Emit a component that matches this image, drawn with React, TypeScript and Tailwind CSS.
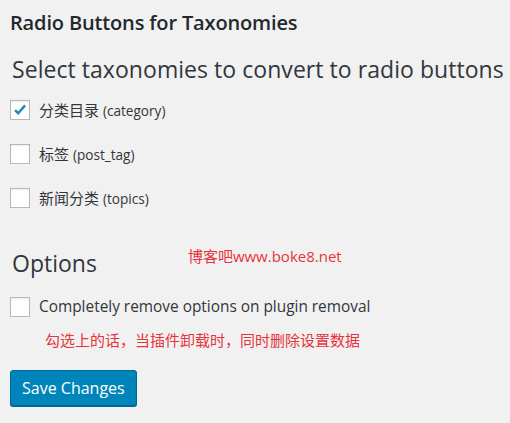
import React from "react";

const font = { fontFamily: '"Open Sans", "Noto Sans CJK SC", sans-serif' };

interface RowProps {
    label: string;
    note: string;
    checked?: boolean;
}

const Box = ({ checked }: { checked?: boolean }) => (
    <span className="flex h-[20px] w-[20px] shrink-0 items-center justify-center border border-[#b4b9be] bg-white shadow-[inset_0_1px_2px_rgba(0,0,0,0.07)]">
        {checked && (
            <svg viewBox="0 0 20 20" className="h-[20px] w-[20px]">
                <path d="M4.5 10.2 L8 13.6 L15.6 4.8" fill="none" stroke="#1e8cbe" strokeWidth="2.8" />
            </svg>
        )}
    </span>
);

const Row = ({ label, note, checked }: RowProps) => (
    <label className="flex h-[44px] items-center gap-[9px]">
        <Box checked={checked} />
        <span className="text-[15px] text-[#32373c]">
            {label} <span className="text-[13.6px]">{note}</span>
        </span>
    </label>
);

const App = () => {
    return (
        <div className="h-[423px] w-[510px] overflow-hidden bg-[#f1f1f1] px-[10px] text-[#23282d]" style={font}>
            <h1 className="pt-[8px] text-[20px] font-semibold leading-[30px] tracking-[-0.15px]">Radio Buttons for Taxonomies</h1>

            <h2 className="ml-[2px] mt-[16px] whitespace-nowrap text-[23px] leading-[30px] tracking-[0.05px] text-[#32373c]">Select taxonomies to convert to radio buttons</h2>

            <div className="mt-[4px]">
                <Row label="分类目录" note="(category)" checked />
                <Row label="标签" note="(post_tag)" />
                <Row label="新闻分类" note="(topics)" />
            </div>

            <div className="mt-[28px] flex items-center">
                <h2 className="ml-[2px] text-[23px] leading-[30px] text-[#32373c]">Options</h2>
                <span className="ml-[91px] -mt-[14px] text-[15px] text-[#e8333d]">博客吧www.boke8.net</span>
            </div>

            <label className="mt-[17px] flex items-center gap-[9px]">
                <Box />
                <span className="text-[15.4px] text-[#32373c]">Completely remove options on plugin removal</span>
            </label>

            <p className="ml-[35px] mt-[11px] text-[15px] text-[#e8333d]">勾选上的话，当插件卸载时，同时删除设置数据</p>

            <button className="mt-[18px] h-[36px] rounded-[3px] border border-[#006799] bg-[#0085ba] px-[11px] text-[16px] text-white shadow-[0_1px_0_#006799]">
                Save Changes
            </button>
        </div>
    );
};

export default App;
